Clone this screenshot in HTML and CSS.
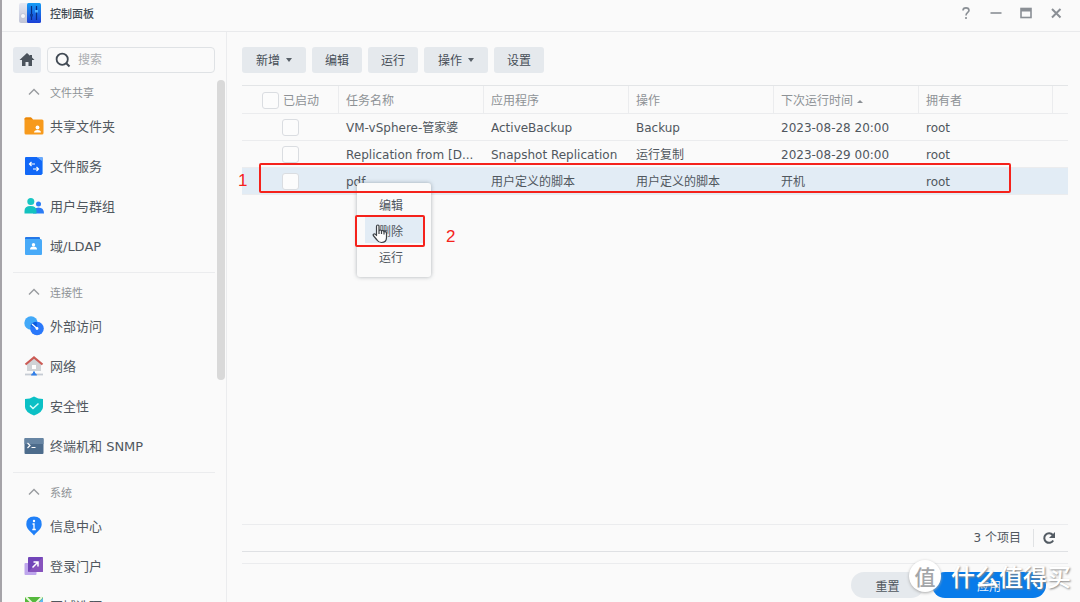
FILE: index.html
```html
<!DOCTYPE html>
<html lang="zh-CN">
<head>
<meta charset="utf-8">
<meta name="viewport" content="width=device-width, initial-scale=1">
<title>控制面板</title>
<link rel="stylesheet" href="styles.css">
</head>
<body>
<div class="window">
  <header class="titlebar">
    <svg class="app-icon" viewBox="0 0 24 22" aria-hidden="true">
      <defs>
        <linearGradient id="gBlue" x1="0" y1="0" x2="0" y2="1"><stop offset="0" stop-color="#169bf5"/><stop offset="1" stop-color="#1b3fd6"/></linearGradient>
        <linearGradient id="gGrey" x1="0" y1="0" x2="0" y2="1"><stop offset="0" stop-color="#e6e8f2"/><stop offset="1" stop-color="#bfc3d6"/></linearGradient>
      </defs>
      <rect x="1" y="1" width="11" height="20" rx="2" fill="url(#gGrey)"/>
      <circle cx="5" cy="14" r="2.5" fill="#f6f7fb" stroke="#aeb3c6" stroke-width=".6"/>
      <rect x="9" y="1" width="14" height="20" rx="1.5" fill="url(#gBlue)"/>
      <path d="M13.500 4v14M18.500 4v14" stroke="#0b2c80" stroke-width="1.200"/>
      <rect x="12" y="12" width="3" height="2.500" fill="#0c3c9d"/><rect x="17" y="8" width="3" height="2.500" fill="#4fb4ff"/>
    </svg>
    <h1 class="title">控制面板</h1>
    <div class="window-controls">
      <button class="win-btn" aria-label="帮助"><svg viewBox="0 0 14 14"><path d="M4 4.500C4 1 10 1 10 4.500C10 6.500 7 6.500 7 9.500M7 11v2"/></svg></button>
      <button class="win-btn" aria-label="最小化"><svg viewBox="0 0 14 14"><path d="M1.500 7h11"/></svg></button>
      <button class="win-btn" aria-label="最大化"><svg viewBox="0 0 14 14"><rect x="2" y="2.500" width="10" height="9"/><path d="M2 4h10" stroke-width="3"/></svg></button>
      <button class="win-btn" aria-label="关闭"><svg viewBox="0 0 14 14"><path d="M3 3l8.500 8.500M11.500 3L3 11.500" stroke-width="2"/></svg></button>
    </div>
  </header>

  <div class="body">
    <aside class="sidebar">
      <div class="search-row">
        <button class="home" aria-label="主页"><svg viewBox="0 0 16 16"><path d="M8 1L0.500 8H3v6h3.500v-4h3v4H13V8h2.500L13 5.600V3h-2v.800z" fill="#4b535c"/></svg></button>
        <label class="search">
          <svg viewBox="0 0 16 16" aria-hidden="true"><circle cx="7.200" cy="7.200" r="5.600" fill="none" stroke="#414a54" stroke-width="1.800"/><path d="M11 11l3.500 3.500" stroke="#414a54" stroke-width="2"/></svg>
          <input type="text" placeholder="搜索" aria-label="搜索">
        </label>
      </div>
      <nav class="nav">
        <section class="group">
          <h2 class="group-title"><svg viewBox="0 0 12 8"><path d="M1 6.500l5-5 5 5"/></svg>文件共享</h2>
          <a class="item" href="#"><svg viewBox="0 0 20 20"><path d="M.500 3q0-1.500 1.500-1.500h5l2 2h9q1.500 0 1.500 1.500v12q0 1.500-1.500 1.500H2q-1.500 0-1.500-1.500z" fill="#f79a1c"/><path d="M.500 3q0-1.500 1.500-1.500h5l2 2H.500z" fill="#e98608"/><circle cx="13.500" cy="11.500" r="1.900" fill="#fff"/><path d="M10 16.500q0-2.500 3.500-2.500t3.500 2.500z" fill="#fff"/></svg>共享文件夹</a>
          <a class="item" href="#"><svg viewBox="0 0 20 20"><path d="M2 1h11l5 3v14q0 1-1 1H2q-1 0-1-1V2q0-1 1-1z" fill="#1268f7"/><path d="M13 1l5 4v13h1V2q0-1-1-1z" fill="#69a9fb"/><path d="M11 8H5.500M7.500 6L5.500 8 7.500 10M9 13h5.500M12.500 11l2 2-2 2" fill="none" stroke="#fff" stroke-width="1.200"/></svg>文件服务</a>
          <a class="item" href="#"><svg viewBox="0 0 20 20"><circle cx="6.800" cy="5.500" r="3.500" fill="#19c7c4"/><circle cx="14.500" cy="8" r="2.500" fill="#2b7cf5"/><path d="M9 17.500q0-6 5.500-6t5.500 6z" fill="#2b7cf5"/><path d="M.500 17.500V15q0-5 6-5t6 5v2.500z" fill="#13c2bf"/></svg>用户与群组</a>
          <a class="item" href="#"><svg viewBox="0 0 20 20"><rect x="1" y="1" width="15" height="5" rx="1" fill="#2478e8"/><path d="M1 3h15.500q1.500 0 1.500 1.500V18q0 1-1 1H2q-1 0-1-1z" fill="#48aaf8"/><circle cx="9.500" cy="8.700" r="1.700" fill="#fff"/><path d="M6 13.500q0-3 3.500-3t3.500 3z" fill="#fff"/></svg>域/LDAP</a>
        </section>
        <section class="group">
          <h2 class="group-title"><svg viewBox="0 0 12 8"><path d="M1 6.500l5-5 5 5"/></svg>连接性</h2>
          <a class="item" href="#"><svg viewBox="0 0 20 20"><circle cx="7" cy="7" r="6.700" fill="#42a9f8"/><circle cx="13" cy="12.500" r="6.800" fill="#2a78fa"/><path d="M6.500 10q1-4 6-4.300 1.200 3.500-1 6z" fill="#0b5ce0"/><path d="M8 8l5 4.500" stroke="#fff" stroke-width="1.200"/><circle cx="13" cy="12.500" r="1.400" fill="#fff"/></svg>外部访问</a>
          <a class="item" href="#"><svg viewBox="0 0 20 20"><path d="M3 8l7-6 7 6v7H3z" fill="#d0d3d6"/><path d="M1.500 8.500L10 1.500l8.500 7" fill="none" stroke="#cb5b55" stroke-width="2.200"/><rect x="8" y="9" width="4" height="4" fill="#fff"/><path d="M1 18.500h18" stroke="#c5cbd3" stroke-width="1.800"/><path d="M9 15.500h2v1.500q2 .500 2 2.500H7q0-2 2-2.500z" fill="#3380e8"/></svg>网络</a>
          <a class="item" href="#"><svg viewBox="0 0 20 20"><path d="M10 .500q4 2.500 9 2.500v8q0 5-9 8.500Q1 16 1 11V3q5 0 9-2.500z" fill="#0bc0c5"/><path d="M6 9.500l3 3 5.500-5" fill="none" stroke="#d6fffb" stroke-width="1.500"/></svg>安全性</a>
          <a class="item" href="#"><svg viewBox="0 0 20 20"><rect x=".500" y="2" width="19" height="16" rx="1" fill="#4d6c8c"/><path d="M.500 3q0-1 1-1h17q1 0 1 1v5H.500z" fill="#6785a3"/><path d="M3.500 7L6 9.500 3.500 12M7.500 11.500h4" fill="none" stroke="#fff" stroke-width="1.200"/></svg>终端机和 SNMP</a>
        </section>
        <section class="group">
          <h2 class="group-title"><svg viewBox="0 0 12 8"><path d="M1 6.500l5-5 5 5"/></svg>系统</h2>
          <a class="item" href="#"><svg viewBox="0 0 20 20"><path d="M10 .500q7.700 0 7.700 7.700c0 5-4.700 7-7.700 11.300C7 15.200 2.300 13.200 2.300 8.200Q2.300.500 10 .500z" fill="#2080f8"/><circle cx="10" cy="5" r="1.200" fill="#fff"/><path d="M8.500 8H10v5.500M8.300 13.500h3.500" fill="none" stroke="#fff" stroke-width="1.300"/></svg>信息中心</a>
          <a class="item" href="#"><svg viewBox="0 0 20 20"><rect x=".500" y="7" width="12" height="12" rx="1" fill="#bea6ec"/><rect x="4" y="1" width="15" height="15" rx="1" fill="#7145b8"/><path d="M4 16L19 1v14q0 1-1 1z" fill="#8753bd"/><path d="M8.500 11.500L14 6M9.500 6H14v4.500" fill="none" stroke="#fff" stroke-width="1.500"/></svg>登录门户</a>
          <a class="item" href="#"><svg viewBox="0 0 20 20"><rect x="1" y="1" width="18" height="18" rx="1" fill="#55b83d"/><path d="M12 9l7-7v16z" fill="#5bb9f4"/><path d="M2 1l8 8 8-8" fill="none" stroke="#e9f8dd" stroke-width="2"/></svg>区域选项</a>
        </section>
      </nav>
      <div class="scroll-thumb"></div>
    </aside>

    <main class="main">
      <div class="toolbar">
        <button class="btn wide">新增<span class="caret"></span></button>
        <button class="btn">编辑</button>
        <button class="btn">运行</button>
        <button class="btn wide">操作<span class="caret"></span></button>
        <button class="btn">设置</button>
      </div>
      <div class="table-area">
        <table class="tasks">
          <colgroup><col class="c-check"><col class="c-text"><col class="c-text"><col class="c-text"><col class="c-text"><col class="c-owner"><col></colgroup>
          <thead>
            <tr><th class="enable"><label><input type="checkbox">已启动</label></th><th>任务名称</th><th>应用程序</th><th>操作</th><th>下次运行时间<span class="caret up"></span></th><th>拥有者</th><th></th></tr>
          </thead>
          <tbody>
            <tr><td class="check"><input type="checkbox" aria-label="启动 VM-vSphere"></td><td>VM-vSphere-管家婆</td><td>ActiveBackup</td><td>Backup</td><td>2023-08-28 20:00</td><td>root</td><td></td></tr>
            <tr><td class="check"><input type="checkbox" aria-label="启动 Replication"></td><td>Replication from [D...</td><td>Snapshot Replication</td><td>运行复制</td><td>2023-08-29 00:00</td><td>root</td><td></td></tr>
            <tr class="selected"><td class="check"><input type="checkbox" aria-label="启动 pdf"></td><td>pdf</td><td>用户定义的脚本</td><td>用户定义的脚本</td><td>开机</td><td>root</td><td></td></tr>
          </tbody>
        </table>
      </div>
      <div class="status">
        <span class="count">3 个项目</span>
        <button class="refresh" aria-label="刷新"><svg viewBox="0 0 14 14"><path d="M11.200 9.500A4.800 4.800 0 1 1 10.800 4" fill="none" stroke="#535b63" stroke-width="2"/><path d="M13 1v6H7z" fill="#535b63"/></svg></button>
      </div>
      <div class="actions">
        <button class="pill reset">重置</button>
        <button class="pill apply">应用</button>
      </div>
    </main>
  </div>

  <div class="menu" role="menu">
    <button role="menuitem">编辑</button>
    <button role="menuitem" class="active">删除</button>
    <button role="menuitem">运行</button>
  </div>
  <div class="mark mark-row"></div>
  <div class="mark mark-delete"></div>
  <span class="step step-one">1</span>
  <span class="step step-two">2</span>
  <svg class="cursor" viewBox="0 0 16 20" aria-hidden="true"><path d="M4.500 11.500V2.500q0-1.500 1.300-1.500T7 2.500V7q.300-1 1.300-1t1.200 1.200q.400-.700 1.200-.700T12 8q.300-.500 1.200-.400T14.500 9v4.500Q14.500 18.500 9.500 18.500 6.500 18.500 5 16L1.300 11.500Q.800 10.300 2 10t2.500 1.500zM7 7v3M9.500 7.500V10M12 8v2.500" fill="#fdfdfd" stroke="#3c4147" stroke-width="1.200" stroke-linejoin="round"/></svg>
  <div class="watermark"><span class="seal">值</span><span>什么值得买</span></div>
</div>
</body>
</html>
```
FILE: styles.css
```css
* { box-sizing: border-box; }
body {
  margin: 0;
  font-family: "DejaVu Sans", "Noto Sans CJK SC", sans-serif;
  font-size: 12px;
  color: #50575e;
  background: #fafafa;
}
button, input { font: inherit; color: inherit; }
button { border: 0; padding: 0; background: none; }

.window {
  position: relative;
  display: flex;
  flex-direction: column;
  height: 100vh;
  overflow: hidden;
  border-left: 2px solid #a5a3a8;
}
.titlebar {
  display: flex;
  flex: none;
  align-items: center;
  height: 32px;
  padding: 0 17px 6px 16px;
  border-bottom: 1px solid #e9eaec;
}
.app-icon { width: 24px; height: 22px; margin-right: 8px; }
.title { margin: 0; font-size: 11px; font-weight: 500; color: #414a54; }
.window-controls { display: flex; gap: 16px; margin-left: auto; }
.win-btn { width: 14px; height: 14px; }
.win-btn svg { display: block; fill: none; stroke: #8a8f95; stroke-width: 1.6px; }

.body { display: flex; flex: 1; min-height: 0; }

.sidebar {
  position: relative;
  flex: none;
  width: 225px;
  overflow: hidden;
  padding: 15px 11px 0;
  border-right: 1px solid #ebecee;
}
.search-row { display: flex; gap: 6px; }
.home {
  display: grid;
  place-items: center;
  width: 28px;
  height: 26px;
  border-radius: 3px;
  background: #e5e9ee;
}
.home svg { width: 16px; height: 16px; }
.search {
  display: flex;
  align-items: center;
  gap: 7px;
  flex: 1;
  height: 26px;
  padding-left: 7px;
  border: 1px solid #dfe2e5;
  border-radius: 4px;
}
.search svg { width: 16px; height: 16px; }
.search input { width: 100px; border: 0; padding: 0; outline: 0; background: none; }
.search input::placeholder { color: #aaadb1; }
.nav { padding-top: 5px; }
.group { padding-bottom: 6px; margin-bottom: 5px; border-bottom: 1px solid #ebecee; }
.group-title {
  display: flex;
  align-items: center;
  gap: 10px;
  height: 28px;
  margin: 0;
  padding: 0 0 1px 15px;
  font-size: 11px;
  font-weight: 400;
  color: #8e9296;
}
.group-title svg { width: 12px; height: 8px; fill: none; stroke: #979a9e; stroke-width: 1.4px; }
.item {
  display: flex;
  align-items: center;
  gap: 6px;
  height: 40px;
  padding: 0 0 1px 11px;
  font-size: 13px;
  color: #50575e;
  text-decoration: none;
}
.item svg { width: 20px; height: 20px; }
.scroll-thumb {
  position: absolute;
  top: 48px;
  right: 1px;
  width: 8px;
  height: 300px;
  border-radius: 4px;
  background: #d9d9d9;
}

.main { display: flex; flex: 1; flex-direction: column; min-width: 0; padding: 15px 12px 4px 15px; }
.toolbar { display: flex; gap: 6px; margin-bottom: 12px; }
.btn {
  display: flex;
  align-items: center;
  justify-content: center;
  gap: 6px;
  width: 50px;
  height: 26px;
  padding-bottom: 2px;
  border-radius: 3px;
  background: #e5e9ed;
  color: #464e57;
}
.btn.wide { width: 64px; }
.caret { margin-top: 2px; border: 3px solid transparent; border-top: 4px solid #596068; border-bottom: 0; }
.caret.up {
  display: inline-block;
  margin: 0 0 0 4px;
  vertical-align: middle;
  border-top: 0;
  border-bottom: 3px solid #8b9095;
}
.table-area { flex: 1; border-top: 1px solid #e3e5e7; }
.tasks { width: 100%; table-layout: fixed; border-collapse: separate; border-spacing: 0; }
.c-check { width: 97px; }
.c-text { width: 145px; }
.c-owner { width: 134px; }
.tasks th, .tasks td {
  height: 27px;
  padding: 2px 0 0 7px;
  border-bottom: 1px solid #ebecee;
  text-align: left;
  font-weight: 400;
  line-height: 18px;
  white-space: nowrap;
}
.tasks th { height: 28px; color: #8e9296; border-right: 1px solid #ebecee; }
.tasks th:last-child { border-right: 0; }
.tasks .enable { padding-left: 20px; }
.enable label { display: flex; align-items: center; gap: 4px; }
.tasks .check { padding: 0 0 0 40px; }
.tasks input {
  display: block;
  appearance: none;
  width: 17px;
  height: 17px;
  margin: 0;
  border: 1px solid #dadde1;
  border-radius: 3px;
  background: #fcfcfc;
}
.selected td { background: #e2ecf5; }

.status {
  display: flex;
  align-items: center;
  justify-content: flex-end;
  height: 28px;
  border-top: 1px solid #ebecee;
  border-bottom: 1px solid #dfe1e4;
}
.count { padding-right: 12px; border-right: 1px solid #e0e2e4; line-height: 18px; }
.refresh { width: 14px; height: 14px; margin: 0 12px 0 8px; }
.refresh svg { display: block; }
.actions {
  display: flex;
  justify-content: flex-end;
  gap: 8px;
  margin-top: 11px;
  padding: 8px 22px 0 0;
  border-top: 1px solid #ebecee;
}
.pill { height: 26px; border-radius: 13px; }
.reset { width: 73px; background: #e5e9ed; }
.apply { width: 114px; background: #087bea; color: #e5f2ff; }

/* Context menu opened over the selected row */
.menu {
  position: absolute;
  top: 183px;
  left: 355px;
  display: flex;
  flex-direction: column;
  width: 74px;
  padding: 8px;
  border-radius: 3px;
  background: #fafafa;
  box-shadow: 0 0 4px rgba(60, 70, 80, .4);
}
.menu button { height: 26px; padding-right: 6px; }
.menu .active { background: #e2ecf5; }

/* Step annotations */
.mark { position: absolute; border: 2px solid #f5221b; border-radius: 2px; }
.mark-row { top: 163px; left: 257px; width: 752px; height: 30px; }
.mark-delete { top: 215px; left: 353px; width: 70px; height: 32px; }
.step { position: absolute; font: 17px/20px "Liberation Sans", sans-serif; color: #f5221b; }
.step-one { top: 171px; left: 236px; }
.step-two { top: 227px; left: 444px; }
.cursor { position: absolute; top: 224px; left: 370px; width: 16px; height: 20px; }

.watermark {
  position: absolute;
  right: 9px;
  bottom: 10px;
  display: flex;
  align-items: center;
  gap: 10px;
  font: 500 24px/32px "Noto Sans CJK SC", sans-serif;
  color: #fff;
  text-shadow: 1px 1px 2px #888;
}
.seal {
  width: 32px;
  height: 32px;
  border-radius: 16px;
  background: #fff;
  box-shadow: 0 1px 3px #aaa;
  font-size: 21px;
  text-align: center;
  text-shadow: none;
  color: #a3a5a8;
}
```
